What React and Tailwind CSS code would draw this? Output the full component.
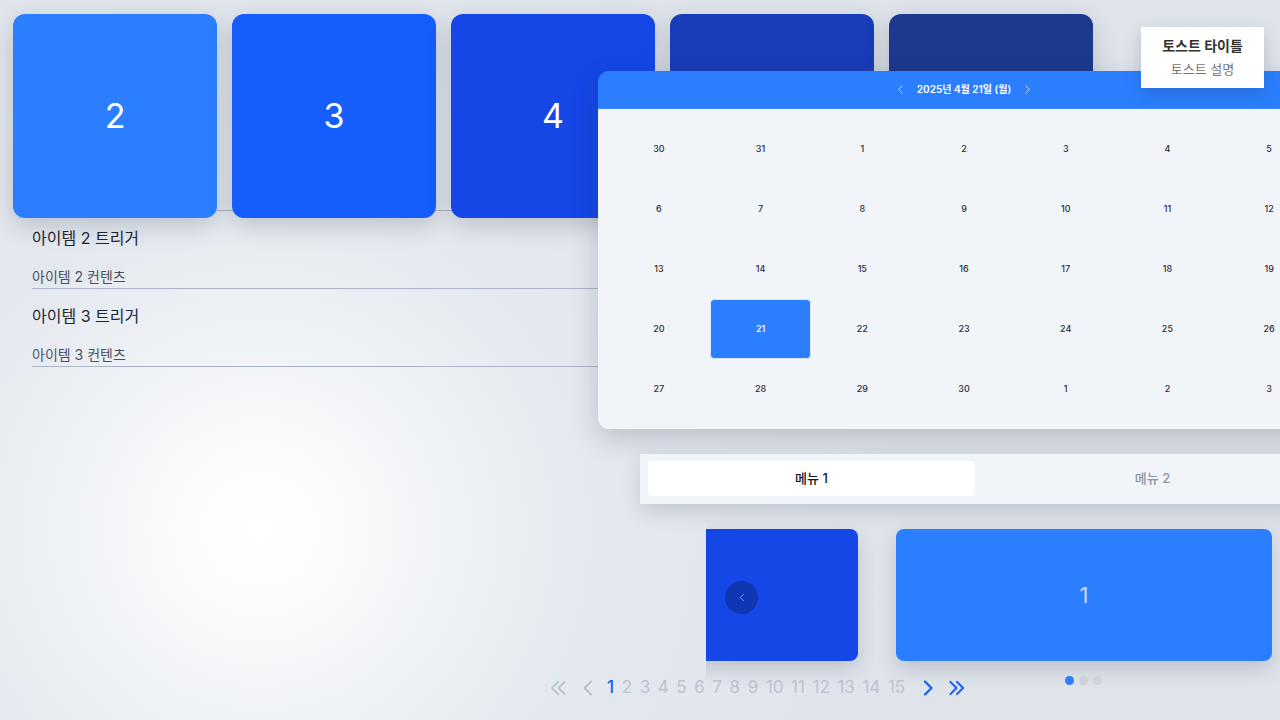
import React from 'react';

const FONT = { fontFamily: "Inter, 'Noto Sans CJK KR', 'Noto Sans', sans-serif" };

const cards = [
    { n: 2, bg: 'bg-[#2b7fff]' },
    { n: 3, bg: 'bg-[#155dfc]' },
    { n: 4, bg: 'bg-[#1447e6]' },
    { n: 5, bg: 'bg-[#193cb8]' },
    { n: 6, bg: 'bg-[#1c398e]' },
];

const weeks = [
    [30, 31, 1, 2, 3, 4, 5],
    [6, 7, 8, 9, 10, 11, 12],
    [13, 14, 15, 16, 17, 18, 19],
    [20, 21, 22, 23, 24, 25, 26],
    [27, 28, 29, 30, 1, 2, 3],
];

const accordion = [
    { trigger: '아이템 1 트리거', content: '아이템 1 컨텐츠' },
    { trigger: '아이템 2 트리거', content: '아이템 2 컨텐츠' },
    { trigger: '아이템 3 트리거', content: '아이템 3 컨텐츠' },
];

function Chevron({ dir = 'left', className = '', stroke = 2 }) {
    const d = dir === 'left' ? 'M9 1.5 L2.5 8 L9 14.5' : 'M3 1.5 L9.5 8 L3 14.5';
    return (
        <svg viewBox="0 0 12 16" className={className} fill="none" stroke="currentColor" strokeWidth={stroke} strokeLinecap="round" strokeLinejoin="round">
            <path d={d} />
        </svg>
    );
}

function DoubleChevron({ dir = 'left', className = '', stroke = 2 }) {
    const paths = dir === 'left'
        ? ['M8.5 1.5 L2 8 L8.5 14.5', 'M15.5 1.5 L9 8 L15.5 14.5']
        : ['M2.5 1.5 L9 8 L2.5 14.5', 'M9.5 1.5 L16 8 L9.5 14.5'];
    return (
        <svg viewBox="0 0 18 16" className={className} fill="none" stroke="currentColor" strokeWidth={stroke} strokeLinecap="round" strokeLinejoin="round">
            {paths.map(p => <path key={p} d={p} />)}
        </svg>
    );
}

export default function App() {
    return (
        <div
            className="relative w-[1280px] h-[720px] overflow-hidden bg-[radial-gradient(circle_at_260px_530px,#ffffff_0px,#fbfcfd_70px,#eff2f6_190px,#e4e8ef_340px,#dfe4eb_650px)]"
            style={FONT}
        >
            {/* Accordion (under the cards) */}
            <div className="absolute left-[32px] top-[133px] w-[600px]">
                {accordion.map(item => (
                    <div key={item.trigger} className="border-b border-[#aeb6c6]">
                        <div className="pt-[15px] text-[16px] leading-[24px] text-[#1e2633]">{item.trigger}</div>
                        <div className="pt-[17px] pb-[1px] text-[14px] leading-[20px] text-[#4a5262]">{item.content}</div>
                    </div>
                ))}
            </div>

            {/* Card row */}
            <div className="absolute left-[13px] top-[14px] flex gap-[15px]">
                {cards.map(c => (
                    <div key={c.n} className={`w-[204px] h-[204px] rounded-[12px] ${c.bg} flex items-center justify-center shadow-[0_8px_24px_rgba(30,41,59,0.2)]`}>
                        <span className="text-white text-[34px] leading-none">{c.n}</span>
                    </div>
                ))}
            </div>

            {/* Calendar */}
            <div className="absolute left-[598px] top-[71px] w-[732px] rounded-[11px] overflow-hidden shadow-[0_10px_28px_rgba(30,41,59,0.2)]">
                <div className="h-[38px] bg-[#2b7fff] border-b border-[#3d8bff] flex items-center justify-center gap-[13px] text-white">
                    <Chevron dir="left" className="w-[7px] h-[9px] opacity-80" stroke={1.6} />
                    <span className="text-[10px] font-semibold">2025년 4월 21일 (월)</span>
                    <Chevron dir="right" className="w-[7px] h-[9px] opacity-80" stroke={1.6} />
                </div>
                <div className="bg-[#f1f5f9] p-[10px] grid grid-cols-7">
                    {weeks.flat().map((d, i) => (
                        <div
                            key={i}
                            className={`h-[60px] flex items-center justify-center text-[9px] font-medium ${
                                d === 21 && i === 22
                                    ? 'bg-[#2b7fff] text-white rounded-[4px] border border-[#dbe7ff]'
                                    : 'text-[#2a2f38]'
                            }`}
                        >
                            {d}
                        </div>
                    ))}
                </div>
            </div>

            {/* Toast */}
            <div className="absolute left-[1141px] top-[27px] w-[123px] h-[61px] bg-white shadow-[0_6px_16px_rgba(30,41,59,0.2)] flex flex-col items-center justify-center gap-[6px]">
                <span className="text-[14px] font-bold leading-[18px] text-[#333333]">토스트 타이틀</span>
                <span className="text-[13px] leading-[17px] text-[#777777]">토스트 설명</span>
            </div>

            {/* Tabs */}
            <div className="absolute left-[640px] top-[454px] w-[684px] h-[50px] bg-[#f1f5f9] pt-[7px] px-[8px] shadow-[0_8px_20px_rgba(30,41,59,0.16)]">
                <div className="grid grid-cols-2 gap-[14px] h-[35px]">
                    <div className="bg-white rounded-[4px] flex items-center justify-center text-[13px] font-medium text-[#111827]">메뉴 1</div>
                    <div className="flex items-center justify-center text-[13px] font-medium text-[#8b95a7]">메뉴 2</div>
                </div>
            </div>

            {/* Carousel */}
            <div className="absolute left-[706px] top-[529px] w-[574px] h-[132px] overflow-x-clip">
                <div className="flex gap-[38px] ml-[-224px] h-full">
                    <div className="w-[376px] h-full shrink-0 rounded-[8px] bg-[#1447e6] shadow-[0_8px_20px_rgba(30,41,59,0.18)]" />
                    <div className="w-[376px] h-full shrink-0 rounded-[8px] bg-[#2b7fff] flex items-center justify-center shadow-[0_8px_20px_rgba(30,41,59,0.18)]">
                        <span className="text-[22px] text-[#cdd8ec]">1</span>
                    </div>
                </div>
            </div>
            <button className="absolute left-[725px] top-[581px] w-[33px] h-[33px] rounded-full bg-[#0f37b3] flex items-center justify-center text-[#aac4ff]">
                <Chevron dir="left" className="w-[6px] h-[9px]" stroke={1.5} />
            </button>

            {/* Carousel dots */}
            <div className="absolute left-[1065px] top-[676px] flex gap-[5px]">
                <span className="w-[9px] h-[9px] rounded-full bg-[#2b7fff]" />
                <span className="w-[9px] h-[9px] rounded-full bg-[#cfd2d8]" />
                <span className="w-[9px] h-[9px] rounded-full bg-[#cfd2d8]" />
            </div>

            {/* Pagination */}
            <div className="absolute left-[550px] top-[678px] h-[20px] flex items-center text-[17px]">
                <DoubleChevron dir="left" className="w-[17px] h-[16px] text-[#b3bfd1]" stroke={1.8} />
                <Chevron dir="left" className="w-[12px] h-[16px] ml-[15px] text-[#b3bfd1]" stroke={1.8} />
                <div className="flex items-center gap-[7.6px] ml-[13px]">
                    {Array.from({ length: 15 }, (_, i) => i + 1).map(n => (
                        <span key={n} className={n === 1 ? 'text-[#155dfc] font-medium' : 'text-[#b9c3d3]'}>{n}</span>
                    ))}
                </div>
                <Chevron dir="right" className="w-[12px] h-[16px] ml-[17px] text-[#155dfc]" stroke={2.2} />
                <DoubleChevron dir="right" className="w-[17px] h-[16px] ml-[14px] text-[#155dfc]" stroke={2.2} />
            </div>
        </div>
    );
}
